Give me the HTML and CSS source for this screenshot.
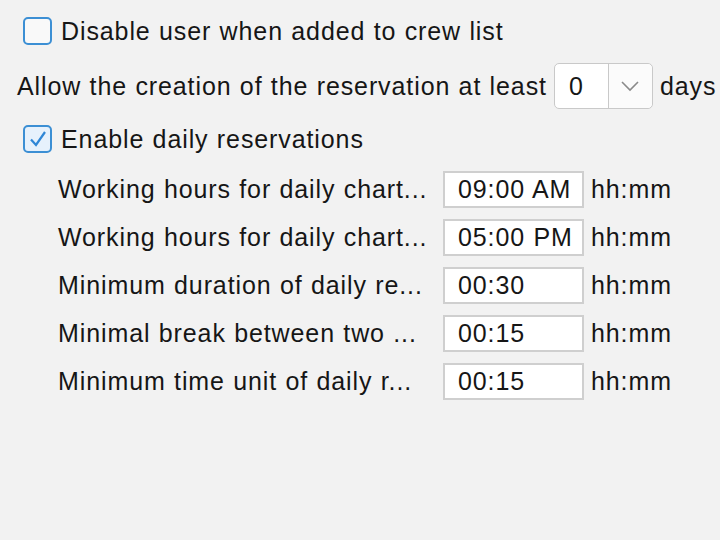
FILE: index.html
```html
<!DOCTYPE html>
<html lang="en">
<head>
  <meta charset="UTF-8">
  <title>Reservation settings</title>
  <link rel="stylesheet" href="styles.css">
</head>
<body>

<div class="panel">
  <label class="check-row">
    <span class="checkbox"></span>
    <span>Disable user when added to crew list</span>
  </label>

  <div class="days-row">
    <span>Allow the creation of the reservation at least</span>
    <div class="select">
      <span class="select-value">0</span>
      <span class="select-arrow">
        <svg width="20" height="12" viewBox="0 0 20 12"><path d="M2 2 L10 10 L18 2" fill="none" stroke="#8a8a8a" stroke-width="1.6"/></svg>
      </span>
    </div>
    <span>days</span>
  </div>

  <label class="check-row">
    <span class="checkbox checked">
      <svg width="20" height="18" viewBox="0 0 20 18"><path d="M3 9.5 L8 15 L17 2" fill="none" stroke="#2e86d6" stroke-width="2.2"/></svg>
    </span>
    <span>Enable daily reservations</span>
  </label>

  <!-- daily chart settings -->
  <div class="fields">
    <div class="field">
      <span class="field-label">Working hours for daily chart...</span>
      <div class="field-input">09:00 AM</div>
      <span class="unit">hh:mm</span>
    </div>
    <div class="field">
      <span class="field-label">Working hours for daily chart...</span>
      <div class="field-input">05:00 PM</div>
      <span class="unit">hh:mm</span>
    </div>
    <div class="field">
      <span class="field-label">Minimum duration of daily re...</span>
      <div class="field-input">00:30</div>
      <span class="unit">hh:mm</span>
    </div>
    <div class="field">
      <span class="field-label">Minimal break between two ...</span>
      <div class="field-input">00:15</div>
      <span class="unit">hh:mm</span>
    </div>
    <div class="field">
      <span class="field-label">Minimum time unit of daily r...</span>
      <div class="field-input">00:15</div>
      <span class="unit">hh:mm</span>
    </div>
  </div>
</div>

</body>
</html>
```

FILE: styles.css
```css
body {
  margin: 0;
  background-color: #f2f2f2;
  font-family: "Liberation Sans", Arial, sans-serif;
  font-size: 25px;
  letter-spacing: 0.9px;
  word-spacing: 0.5px;
  color: #161616;
  overflow: hidden;
}

.panel {
  padding-top: 17px;
  white-space: nowrap;
}

.check-row {
  display: flex;
  align-items: center;
  gap: 9px;
  height: 28px;
  margin-left: 23px;
}

.checkbox {
  width: 25px;
  height: 24px;
  border: 2px solid #3c8fd4;
  border-radius: 5px;
  background-color: #f9f9f9;
  display: flex;
  align-items: center;
  justify-content: center;
  flex-shrink: 0;
}

.checkbox.checked {
  background-color: #e6f1fc;
}

.days-row {
  display: flex;
  align-items: center;
  gap: 7px;
  height: 46px;
  margin: 18px 0 16px 17px;
}

.select {
  display: flex;
  width: 97px;
  height: 44px;
  border: 1px solid #c9c9c9;
  border-radius: 5px;
  background-color: #fff;
  flex-shrink: 0;
}

.select-value {
  width: 54px;
  padding-left: 14px;
  box-sizing: border-box;
  line-height: 44px;
  border-right: 1px solid #c9c9c9;
}

.select-arrow {
  flex: 1;
  display: flex;
  align-items: center;
  justify-content: center;
  background-color: #fbfbfb;
  border-radius: 0 5px 5px 0;
}

.fields {
  display: flex;
  flex-direction: column;
  gap: 11px;
  margin-top: 18px;
  padding-left: 58px;
}

.field {
  display: flex;
  align-items: center;
  height: 37px;
}

.field-label {
  width: 385px;
}

.field-input {
  width: 141px;
  height: 37px;
  box-sizing: border-box;
  border: 2px solid #cfcfcf;
  background-color: #fff;
  padding-left: 13px;
  line-height: 33px;
}

.unit {
  margin-left: 7px;
}
```
